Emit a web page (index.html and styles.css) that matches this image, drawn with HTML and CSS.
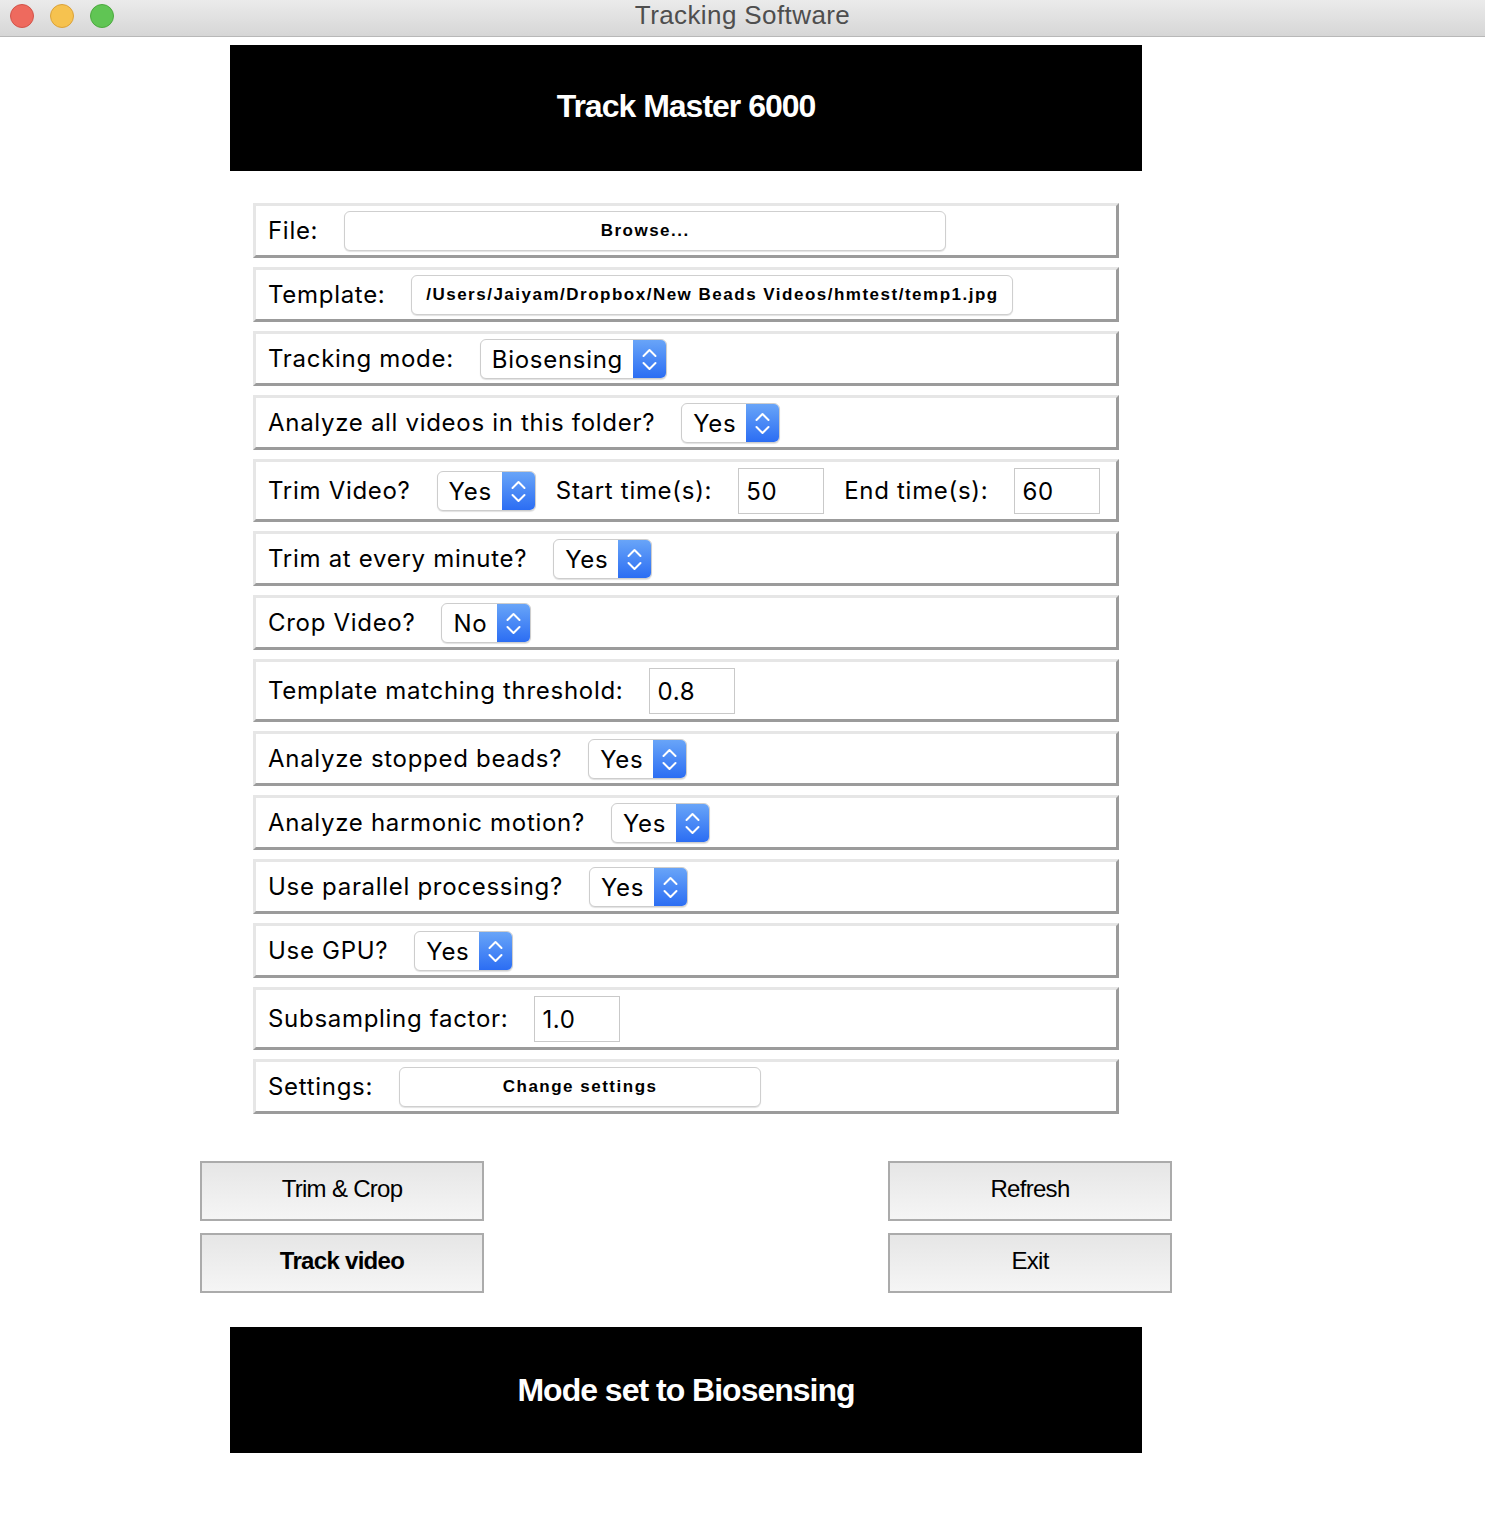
FILE: index.html
```html
<!DOCTYPE html>
<html>
<head>
<meta charset="utf-8">
<title>Tracking Software</title>
<link rel="stylesheet" href="styles.css">
</head>
<body>
<div class="titlebar">
  <div class="lights">
    <span class="light red"></span>
    <span class="light yellow"></span>
    <span class="light green"></span>
  </div>
  <div class="wtitle">Tracking Software</div>
  <div></div>
</div>
<main class="app">
  <header class="banner top">Track Master 6000</header>
  <section class="form">
    <div class="row">
      <span class="lbl">File:</span>
      <button class="pbtn wide">Browse...</button>
    </div>
    <div class="row">
      <span class="lbl">Template:</span>
      <button class="pbtn wide">/Users/Jaiyam/Dropbox/New Beads Videos/hmtest/temp1.jpg</button>
    </div>
    <div class="row">
      <span class="lbl">Tracking mode:</span>
      <span class="sel"><span class="val">Biosensing</span><span class="arr"><svg width="33" height="40" viewBox="0 0 33 40"><path d="M10.5 17 L16.5 11 L22.5 17 M10.5 24 L16.5 30 L22.5 24" fill="none" stroke="#fff" stroke-width="2" stroke-linecap="round" stroke-linejoin="round"/></svg></span></span>
    </div>
    <div class="row">
      <span class="lbl">Analyze all videos in this folder?</span>
      <span class="sel"><span class="val">Yes</span><span class="arr"><svg width="33" height="40" viewBox="0 0 33 40"><path d="M10.5 17 L16.5 11 L22.5 17 M10.5 24 L16.5 30 L22.5 24" fill="none" stroke="#fff" stroke-width="2" stroke-linecap="round" stroke-linejoin="round"/></svg></span></span>
    </div>
    <div class="row">
      <span class="lbl">Trim Video?</span>
      <span class="sel"><span class="val">Yes</span><span class="arr"><svg width="33" height="40" viewBox="0 0 33 40"><path d="M10.5 17 L16.5 11 L22.5 17 M10.5 24 L16.5 30 L22.5 24" fill="none" stroke="#fff" stroke-width="2" stroke-linecap="round" stroke-linejoin="round"/></svg></span></span>
      <span class="lbl near">Start time(s):</span>
      <input class="num" type="text" value="50">
      <span class="lbl near">End time(s):</span>
      <input class="num" type="text" value="60">
    </div>
    <div class="row">
      <span class="lbl">Trim at every minute?</span>
      <span class="sel"><span class="val">Yes</span><span class="arr"><svg width="33" height="40" viewBox="0 0 33 40"><path d="M10.5 17 L16.5 11 L22.5 17 M10.5 24 L16.5 30 L22.5 24" fill="none" stroke="#fff" stroke-width="2" stroke-linecap="round" stroke-linejoin="round"/></svg></span></span>
    </div>
    <div class="row">
      <span class="lbl">Crop Video?</span>
      <span class="sel"><span class="val">No</span><span class="arr"><svg width="33" height="40" viewBox="0 0 33 40"><path d="M10.5 17 L16.5 11 L22.5 17 M10.5 24 L16.5 30 L22.5 24" fill="none" stroke="#fff" stroke-width="2" stroke-linecap="round" stroke-linejoin="round"/></svg></span></span>
    </div>
    <div class="row">
      <span class="lbl">Template matching threshold:</span>
      <input class="num" type="text" value="0.8">
    </div>
    <div class="row">
      <span class="lbl">Analyze stopped beads?</span>
      <span class="sel"><span class="val">Yes</span><span class="arr"><svg width="33" height="40" viewBox="0 0 33 40"><path d="M10.5 17 L16.5 11 L22.5 17 M10.5 24 L16.5 30 L22.5 24" fill="none" stroke="#fff" stroke-width="2" stroke-linecap="round" stroke-linejoin="round"/></svg></span></span>
    </div>
    <div class="row">
      <span class="lbl">Analyze harmonic motion?</span>
      <span class="sel"><span class="val">Yes</span><span class="arr"><svg width="33" height="40" viewBox="0 0 33 40"><path d="M10.5 17 L16.5 11 L22.5 17 M10.5 24 L16.5 30 L22.5 24" fill="none" stroke="#fff" stroke-width="2" stroke-linecap="round" stroke-linejoin="round"/></svg></span></span>
    </div>
    <div class="row">
      <span class="lbl">Use parallel processing?</span>
      <span class="sel"><span class="val">Yes</span><span class="arr"><svg width="33" height="40" viewBox="0 0 33 40"><path d="M10.5 17 L16.5 11 L22.5 17 M10.5 24 L16.5 30 L22.5 24" fill="none" stroke="#fff" stroke-width="2" stroke-linecap="round" stroke-linejoin="round"/></svg></span></span>
    </div>
    <div class="row">
      <span class="lbl">Use GPU?</span>
      <span class="sel"><span class="val">Yes</span><span class="arr"><svg width="33" height="40" viewBox="0 0 33 40"><path d="M10.5 17 L16.5 11 L22.5 17 M10.5 24 L16.5 30 L22.5 24" fill="none" stroke="#fff" stroke-width="2" stroke-linecap="round" stroke-linejoin="round"/></svg></span></span>
    </div>
    <div class="row">
      <span class="lbl">Subsampling factor:</span>
      <input class="num" type="text" value="1.0">
    </div>
    <div class="row">
      <span class="lbl">Settings:</span>
      <button class="pbtn settings">Change settings</button>
    </div>
  </section>
  <div class="actions">
    <div class="col">
      <button class="abtn">Trim &amp; Crop</button>
      <button class="abtn strong">Track video</button>
    </div>
    <div class="col">
      <button class="abtn">Refresh</button>
      <button class="abtn">Exit</button>
    </div>
  </div>
  <footer class="banner bottom">Mode set to Biosensing</footer>
</main>
</body>
</html>
```

FILE: styles.css
```css
html, body {
  margin: 0;
  padding: 0;
  background: #fff;
}
body {
  font-family: "Inter", "Liberation Sans", sans-serif;
  color: #000;
}
.titlebar {
  height: 36px;
  border-bottom: 1px solid #b8b8b8;
  background: linear-gradient(#ebebeb, #d6d6d6);
  display: grid;
  grid-template-columns: 1fr auto 1fr;
  align-items: center;
}
.lights {
  display: flex;
  gap: 16px;
  padding-left: 10px;
  padding-bottom: 6px;
}
.light {
  width: 24px;
  height: 24px;
  border-radius: 50%;
  box-sizing: border-box;
}
.red { background: #ee6a5e; border: 1px solid #d2544a; }
.yellow { background: #f6c24f; border: 1px solid #dba23a; }
.green { background: #60c554; border: 1px solid #4ca93f; }
.wtitle {
  font-family: "Liberation Sans", sans-serif;
  font-size: 26px;
  letter-spacing: 0.4px;
  color: #4e4e4e;
  padding-bottom: 6px;
}
.app {
  margin-left: 230px;
  width: 912px;
  padding-top: 8px;
}
.banner {
  height: 126px;
  box-sizing: border-box;
  background: #000;
  color: #fff;
  font-family: "Liberation Sans", sans-serif;
  font-weight: bold;
  font-size: 32px;
  letter-spacing: -1px;
  display: flex;
  align-items: center;
  justify-content: center;
}
.banner.top {
  padding-bottom: 4px;
}
.form {
  margin: 32px 23px 0 23px;
  display: flex;
  flex-direction: column;
  gap: 9px;
}
.row {
  border-style: solid;
  border-width: 3px;
  border-color: #e6e6e6 #9b9b9b #9b9b9b #e6e6e6;
  background: #fff;
  box-sizing: border-box;
  padding: 4px 12px;
  display: flex;
  align-items: center;
  gap: 26px;
  min-height: 55px;
}
.lbl {
  font-size: 24px;
  letter-spacing: 0.7px;
  white-space: nowrap;
}
.lbl.near {
  margin-left: -6px;
}
.pbtn {
  height: 40px;
  background: #fff;
  border: 1px solid #cfcfcf;
  border-radius: 6px;
  box-shadow: 0 1px 1px rgba(0,0,0,0.12);
  font-family: "Liberation Sans", sans-serif;
  font-weight: bold;
  font-size: 17px;
  letter-spacing: 1.5px;
  color: #000;
  padding: 0;
}
.wide { width: 602px; }
.settings { width: 362px; }
.sel {
  display: inline-flex;
  height: 40px;
  box-sizing: border-box;
  border: 1px solid #cdcdcd;
  border-radius: 6px;
  box-shadow: 0 1px 1px rgba(0,0,0,0.12);
  background: #fff;
  overflow: hidden;
}
.val {
  font-size: 24px;
  letter-spacing: 0.7px;
  line-height: 40px;
  padding: 0 10px 0 11px;
}
.arr {
  width: 33px;
  height: 40px;
  margin-top: -1px;
  background: linear-gradient(#6aa6f8, #2a6cf3);
  display: block;
}
.arr svg { display: block; }
.num {
  width: 86px;
  height: 46px;
  box-sizing: border-box;
  border: 1px solid #c9c9c9;
  font-family: "Inter", "Liberation Sans", sans-serif;
  font-size: 24px;
  letter-spacing: 0.7px;
  padding: 2px 0 0 7px;
  margin: 1.5px 0;
  color: #000;
  outline: none;
}
.actions {
  margin: 47px -30px 0 -30px;
  display: flex;
  justify-content: space-between;
}
.col {
  display: flex;
  flex-direction: column;
  gap: 12px;
}
.abtn {
  width: 284px;
  height: 60px;
  border: 2px solid #ababab;
  background: linear-gradient(#e6e6e6, #f5f5f5);
  font-family: "Liberation Sans", sans-serif;
  font-size: 24px;
  letter-spacing: -0.7px;
  color: #000;
  padding: 0 0 4px 0;
}
.abtn.strong { font-weight: bold; }
.banner.bottom {
  margin-top: 34px;
}
```
